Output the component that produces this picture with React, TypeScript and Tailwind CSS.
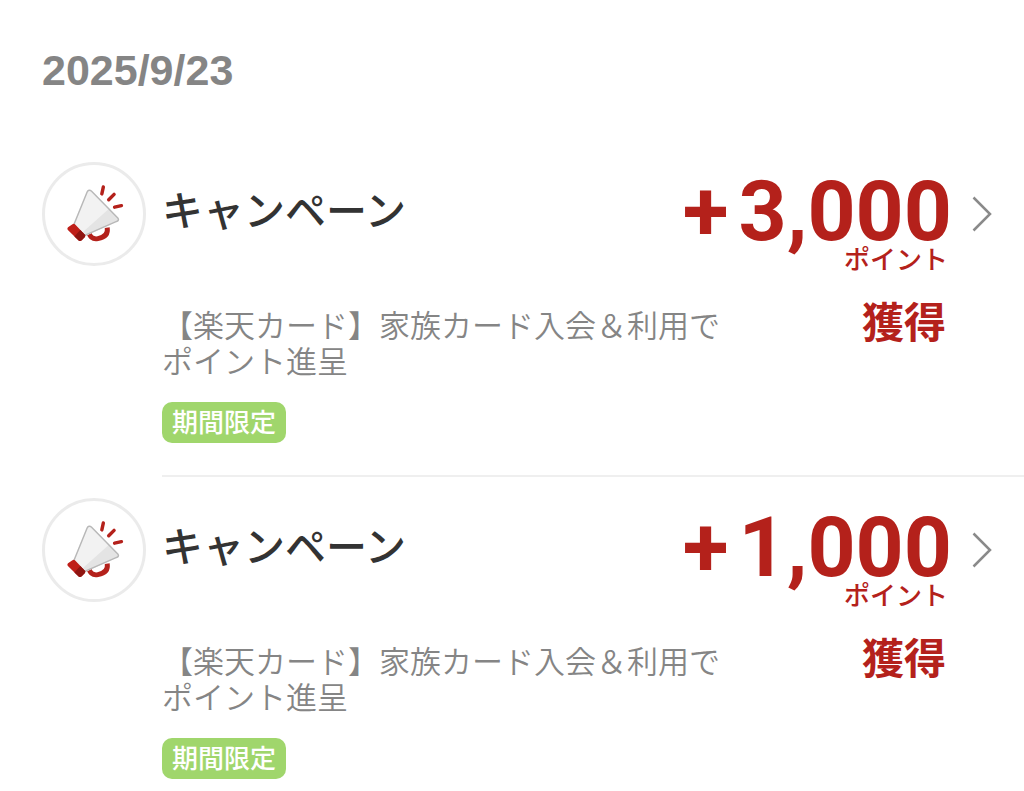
import React from 'react';

interface PointEntry {
  id: number;
  title: string;
  description: string;
  tag: string;
  points: number;
}

const date = '2025/9/23';

const entries: PointEntry[] = [
  {
    id: 1,
    title: 'キャンペーン',
    description: '【楽天カード】家族カード入会＆利用でポイント進呈',
    tag: '期間限定',
    points: 3000,
  },
  {
    id: 2,
    title: 'キャンペーン',
    description: '【楽天カード】家族カード入会＆利用でポイント進呈',
    tag: '期間限定',
    points: 1000,
  },
];

const MegaphoneIcon: React.FC = () => (
  <svg viewBox="0 0 100 100" className="w-full h-full" fill="none" aria-hidden="true">
    <path
      d="M45 70c1.500 4.500 4.500 6 9 5.200 7-1.200 10.500-5 9.500-11.200"
      stroke="#b4211b"
      strokeWidth="5"
    />
    <path
      d="M43 27.500c.8-2 2.800-2.300 4.300-1l27 27.500c1.300 1.500.7 3-1.200 3.600L40 73 29 62Z"
      fill="#f2f2f2"
    />
    <path d="M65 45l9.300 9c1.300 1.500.7 3-1.200 3.600L40 73l-3-3Z" fill="#e4e4e4" />
    <path
      d="M29 62L43 27.500c.8-2 2.800-2.300 4.300-1l27 27.500c1.300 1.500.7 3-1.200 3.600L40 72"
      stroke="#b8b8b8"
      strokeWidth="1.500"
      strokeLinejoin="round"
    />
    <path
      d="M28 60.500c1-.8 2-.7 2.800.1L40.500 71c.8.800.8 1.800 0 2.600l-3 3.300c-1 1-2.200 1-3.200.1L23.600 66.500c-1-1-1-2.200-.1-3.100Z"
      fill="#bf1f19"
    />
    <path
      d="M36 66.200l4.500 4.800c.8.800.8 1.800 0 2.600l-3 3.300c-1 1-2.200 1-3.200.1L30 73Z"
      fill="#8f1511"
    />
    <path
      d="M59.500 22.500L58 29.500M70.500 30l-5.500 5.500M78 41.500l-7 1.500"
      stroke="#b4211b"
      strokeWidth="3.500"
      strokeLinecap="round"
    />
  </svg>
);

const PointRow: React.FC<{ entry: PointEntry }> = ({ entry }) => (
  <li className="group">
    <a href="#detail" className="flex gap-4 pl-[42px]">
      <div className="w-26 h-26 mt-[21px] shrink-0 rounded-full border-3 border-[#ebebeb] overflow-hidden">
        <MegaphoneIcon />
      </div>

      <div className="flex flex-1 min-w-0 pt-[21px] pr-8 pb-8 border-b-2 border-[#efefef] group-last:border-b-0 group-last:pb-3">
        <div className="flex-1 min-w-0">
          <div className="flex items-start justify-between">
            <h2 className="mt-[22px] text-[41px] leading-12 font-medium text-[#333333]">{entry.title}</h2>
            <div className="flex flex-col items-end text-[#b4211b]">
              <p className="flex gap-[10px] pt-4 font-['Roboto',sans-serif] text-[84px] leading-17 font-bold">
                <span>+</span>
                <span>{entry.points.toLocaleString('en-US')}</span>
              </p>
              <p className="pr-1 text-[26px] leading-6 font-medium">ポイント</p>
            </div>
          </div>

          <div className="mt-9 flex items-start justify-between">
            <div className="max-w-[570px]">
              <p className="text-[31px] leading-9 font-[350] text-[#858585]">{entry.description}</p>
              <span className="inline-block mt-6 px-[10px] pb-[3px] rounded-[10px] bg-[#a0d66c] text-[26px] leading-[38px] font-medium text-white">
                {entry.tag}
              </span>
            </div>
            <p className="pr-[6px] text-[42px] leading-7 font-bold text-[#b4211b]">獲得</p>
          </div>
        </div>

        <svg
          viewBox="0 0 20 36"
          className="w-5 h-9 ml-5 mt-[34px] shrink-0"
          fill="none"
          stroke="#8a8a8a"
          strokeWidth="2.500"
          aria-hidden="true"
        >
          <path d="M1.500 1.500L18 18 1.500 34.500" />
        </svg>
      </div>
    </a>
  </li>
);

export default function App() {
  return (
    <main className="bg-white font-['Liberation_Sans','Noto_Sans_CJK_JP',sans-serif]" lang="ja">
      <h1 className="pt-[46px] pb-[47px] pl-[42px] text-[43px] leading-12 font-bold text-[#858585]">
        {date}
      </h1>
      <ul className="font-['Noto_Sans_CJK_JP',sans-serif]">
        {entries.map((entry) => (
          <PointRow key={entry.id} entry={entry} />
        ))}
      </ul>
    </main>
  );
}
